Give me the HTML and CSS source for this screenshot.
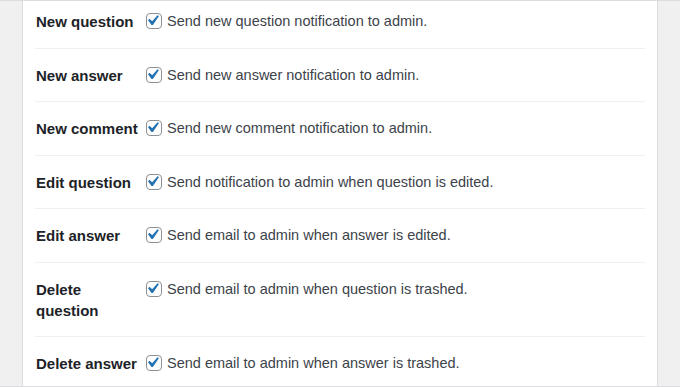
FILE: index.html
```html
<!DOCTYPE html>
<html lang="en">
<head>
    <meta charset="UTF-8">
    <meta name="viewport" content="width=device-width, initial-scale=1.0">
    <title>Email notifications</title>
    <link rel="stylesheet" href="styles.css">
</head>
<body>
    <div class="gutter"></div>
    <div class="panel">
        <div class="form-table">
            <div class="row">
                <div class="label">New question</div>
                <label class="field"><span class="box"></span>Send new question notification to admin.</label>
            </div>
            <div class="row">
                <div class="label">New answer</div>
                <label class="field"><span class="box"></span>Send new answer notification to admin.</label>
            </div>
            <div class="row">
                <div class="label">New comment</div>
                <label class="field"><span class="box"></span>Send new comment notification to admin.</label>
            </div>
            <div class="row">
                <div class="label">Edit question</div>
                <label class="field"><span class="box"></span>Send notification to admin when question is edited.</label>
            </div>
            <div class="row">
                <div class="label">Edit answer</div>
                <label class="field"><span class="box"></span>Send email to admin when answer is edited.</label>
            </div>
            <div class="row">
                <div class="label">Delete question</div>
                <label class="field"><span class="box"></span>Send email to admin when question is trashed.</label>
            </div>
            <div class="row">
                <div class="label">Delete answer</div>
                <label class="field"><span class="box"></span>Send email to admin when answer is trashed.</label>
            </div>
        </div>
    </div>
    <div class="gutter"></div>
    <script>
        // same checked box in every row
        const tick = '<svg viewBox="0 0 16 16" width="16" height="16">' +
            '<rect x="0.5" y="0.5" width="15" height="15" rx="3.5" fill="#fff" stroke="#8c8f94"/>' +
            '<g transform="translate(-4 -3) scale(1.05)"><path fill="#2271b1" d="M14.83 4.89l1.34.94-5.81 8.38H9.02L5.78 9.67l1.34-1.25 2.57 2.4z"/></g>' +
            '</svg>';
        document.querySelectorAll('.box').forEach(box => {
            box.innerHTML = tick;
        });
    </script>
</body>
</html>
```

FILE: styles.css
```css
html, body {
    height: 100%;
}
body {
    margin: 0;
    display: flex;
    background-color: #f0f0f1;
    font-family: 'Liberation Sans', Arial, sans-serif;
    color: #1d2327;
    box-sizing: border-box;
    border-top: 1px solid #dcdcde;
    border-bottom: 1px solid #dcdcde;
    overflow: hidden;
}
.gutter {
    width: 22px;
    flex: none;
}
.gutter:last-child {
    flex: 1;
}
.panel {
    width: 634px;
    background-color: #ffffff;
    border-left: 1px solid #dcdcde;
    border-right: 1px solid #dcdcde;
    padding: 0 12px;
    box-sizing: content-box;
    overflow: hidden;
}
.form-table {
    margin-top: -7px;
}
.row {
    display: grid;
    grid-template-columns: 106px 1fr;
    column-gap: 4px;
    padding: 16px 1px 15.5px;
    border-top: 1px solid #f0f0f1;
}
.row:first-child {
    border-top: none;
    padding-top: 17px;
}
.label {
    font-size: 15px;
    font-weight: bold;
    line-height: 21px;
}
.field {
    display: flex;
    align-items: flex-start;
    gap: 5px;
    font-size: 14.5px;
    line-height: 21px;
    color: #3c434a;
}
.box {
    flex: none;
    width: 16px;
    height: 16px;
    margin-top: 2px;
}
.box svg {
    display: block;
}
```
